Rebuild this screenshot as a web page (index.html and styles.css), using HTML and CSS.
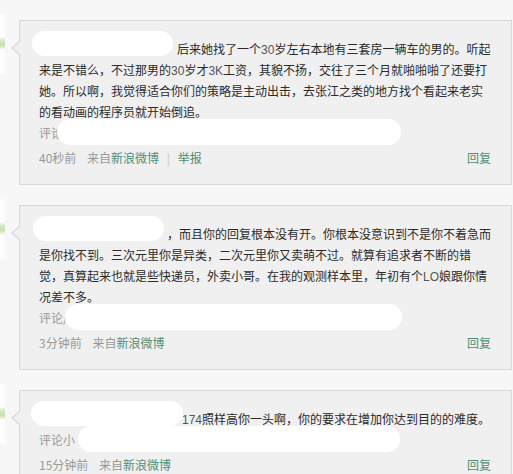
FILE: index.html
```html
<!DOCTYPE html>
<html lang="zh-CN">
<head>
    <meta charset="UTF-8">
    <title>评论</title>
    <link rel="stylesheet" href="styles.css">
</head>
<body>
    <div class="list">
        <div class="item">
            <div class="avatar"></div>
            <div class="card">
                <span class="blot blot-name" style="left: 12px; width: 141px;"></span>
                <span class="blot blot-meta" style="left: 37px; width: 344px;"></span>
                <div class="text">
                    <div class="line indent" style="padding-left: 138px;">后来她找了一个<span class="num">30</span>岁左右本地有三套房一辆车的男的。听起</div>
                    <div class="line">来是不错么，不过那男的<span class="num">30</span>岁才<span class="num">3K</span>工资，其貌不扬，交往了三个月就啪啪啪了还要打</div>
                    <div class="line">她。所以啊，我觉得适合你们的策略是主动出击，去张江之类的地方找个看起来老实</div>
                    <div class="line">的看动画的程序员就开始倒追。</div>
                </div>
                <div class="meta">评论</div>
                <div class="footer">
                    <div class="info">
                        <span class="time">40秒前</span>
                        <span class="from">来自<a href="#">新浪微博</a></span>
                        <span class="sep">|</span>
                        <a href="#">举报</a>
                    </div>
                    <a href="#" class="reply">回复</a>
                </div>
            </div>
        </div>

        <div class="item">
            <div class="avatar"></div>
            <div class="card">
                <span class="blot blot-name" style="left: 13px; width: 131px;"></span>
                <span class="blot blot-meta" style="left: 45px; width: 337px;"></span>
                <div class="text">
                    <div class="line" style="padding-left: 128px;">，而且你的回复根本没有开。你根本没意识到不是你不着急而</div>
                    <div class="line">是你找不到。三次元里你是异类，二次元里你又卖萌不过。就算有追求者不断的错</div>
                    <div class="line">觉，真算起来也就是些快递员，外卖小哥。在我的观测样本里，年初有个<span class="num">LO</span>娘跟你情</div>
                    <div class="line">况差不多。</div>
                </div>
                <div class="meta">评论/</div>
                <div class="footer">
                    <div class="info">
                        <span class="time">3分钟前</span>
                        <span class="from">来自<a href="#">新浪微博</a></span>
                    </div>
                    <a href="#" class="reply">回复</a>
                </div>
            </div>
        </div>

        <div class="item">
            <div class="avatar"></div>
            <div class="card">
                <span class="blot blot-name" style="left: 11px; width: 152px;"></span>
                <span class="blot blot-meta" style="left: 58px; width: 322px;"></span>
                <div class="text">
                    <div class="line" style="padding-left: 143px;"><span class="num">174</span>照样高你一头啊，你的要求在增加你达到目的的难度。</div>
                </div>
                <div class="meta">评论小</div>
                <div class="footer">
                    <div class="info">
                        <span class="time">15分钟前</span>
                        <span class="from">来自<a href="#">新浪微博</a></span>
                    </div>
                    <a href="#" class="reply">回复</a>
                </div>
            </div>
        </div>
    </div>
</body>
</html>
```
FILE: styles.css
```css
body {
    margin: 0;
    padding: 0;
    background-color: #F7F7F7;
    font-family: "Noto Sans CJK SC", "Liberation Sans", sans-serif;
    font-size: 12px;
    color: #2B2B2B;
    overflow: hidden;
}

.list {
    padding-top: 20px;
}

.item {
    position: relative;
    padding-left: 19px;
    padding-right: 1px;
    margin-bottom: 20px;
}

/* avatar cut off by the left edge */
.avatar {
    position: absolute;
    left: 0;
    top: -6px;
    width: 5px;
    height: 60px;
    background: linear-gradient(to bottom, #FFFFFF 0%, #FFFFFF 38%, #CDE6B8 44%, #B8DA9C 52%, #FFFFFF 60%, #FFFFFF 100%);
    opacity: 0.8;
}

.card {
    position: relative;
    background-color: #F0F0F0;
    border: 1px solid #D9D9D9;
    padding: 17px 20px 16px 19px;
}

/* little arrow pointing to the avatar */
.card::before,
.card::after {
    content: "";
    position: absolute;
    top: 20px;
    border-style: solid;
    border-color: transparent;
}

.card::before {
    left: -9px;
    border-width: 7px 8px 7px 0;
    border-right-color: #D9D9D9;
}

.card::after {
    left: -7px;
    border-width: 7px 8px 7px 0;
    border-right-color: #F0F0F0;
}

/* white redaction marks */
.blot {
    position: absolute;
    background-color: #FFFFFF;
    border-radius: 14px;
}

.blot-name {
    top: 10px;
    height: 25px;
}

.blot-meta {
    bottom: 39px;
    height: 26px;
}

.line,
.meta,
.footer {
    height: 21px;
    line-height: 21px;
    white-space: nowrap;
    overflow: visible;
}

.num {
    font-family: "Liberation Sans", sans-serif;
    color: #555555;
    line-height: 1;
}

.meta {
    color: #999999;
}

.footer {
    margin-top: 4px;
    display: flex;
    justify-content: space-between;
    color: #999999;
}

.footer a {
    color: #4F8D74;
    text-decoration: none;
}

.time {
    margin-right: 8px;
}

.sep {
    color: #C8C8C8;
    margin: 0 5px;
}
```
